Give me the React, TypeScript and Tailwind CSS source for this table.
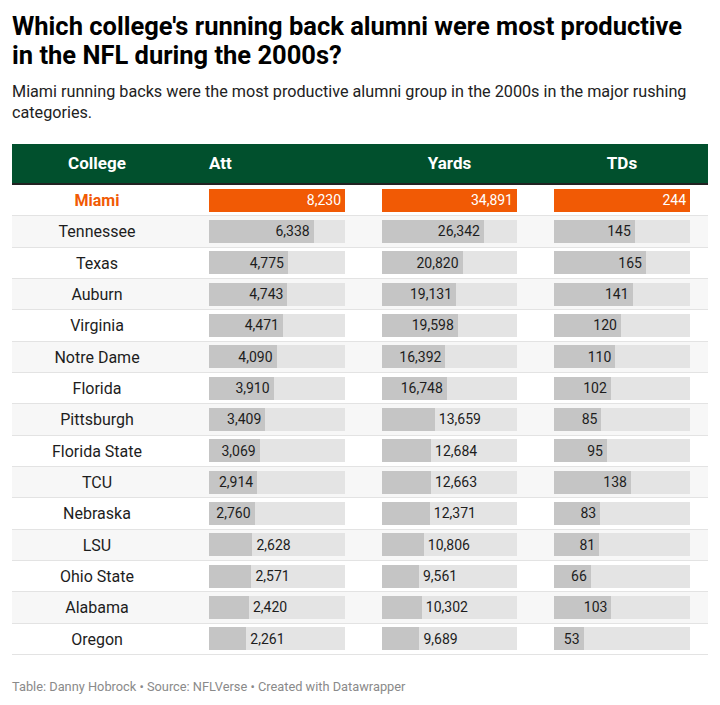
import React from "react";

type Row = { college: string; att: number; yards: number; tds: number };

const rows: Row[] = [
  { college: "Miami", att: 8230, yards: 34891, tds: 244 },
  { college: "Tennessee", att: 6338, yards: 26342, tds: 145 },
  { college: "Texas", att: 4775, yards: 20820, tds: 165 },
  { college: "Auburn", att: 4743, yards: 19131, tds: 141 },
  { college: "Virginia", att: 4471, yards: 19598, tds: 120 },
  { college: "Notre Dame", att: 4090, yards: 16392, tds: 110 },
  { college: "Florida", att: 3910, yards: 16748, tds: 102 },
  { college: "Pittsburgh", att: 3409, yards: 13659, tds: 85 },
  { college: "Florida State", att: 3069, yards: 12684, tds: 95 },
  { college: "TCU", att: 2914, yards: 12663, tds: 138 },
  { college: "Nebraska", att: 2760, yards: 12371, tds: 83 },
  { college: "LSU", att: 2628, yards: 10806, tds: 81 },
  { college: "Ohio State", att: 2571, yards: 9561, tds: 66 },
  { college: "Alabama", att: 2420, yards: 10302, tds: 103 },
  { college: "Oregon", att: 2261, yards: 9689, tds: 53 },
];

const fmt = (n: number) => n.toLocaleString("en-US");

// rough Roboto 14px text width, used to decide if the label fits in the bar
const textWidth = (s: string) =>
  s.split("").reduce((w, c) => w + (c === "," ? 2.8 : 7.9), 0);

const Bar = ({
  value,
  max,
  track,
  highlight,
}: {
  value: number;
  max: number;
  track: number;
  highlight: boolean;
}) => {
  const w = (value / max) * track;
  const label = fmt(value);
  const inside = w - textWidth(label) >= 11;

  return (
    <div className="flex h-[23px] bg-[#e4e4e4]" style={{ width: track }}>
      <div
        className={`flex h-full shrink-0 items-center justify-end ${
          highlight ? "bg-[#f15a05]" : "bg-[#c5c5c5]"
        }`}
        style={{ width: w }}
      >
        {inside && (
          <span
            className={`pr-[4px] text-[14px] leading-none ${
              highlight ? "text-white" : "text-[#1d1d1d]"
            }`}
          >
            {label}
          </span>
        )}
      </div>
      {!inside && (
        <span className="flex items-center pl-[4px] text-[14px] leading-none text-[#1d1d1d]">
          {label}
        </span>
      )}
    </div>
  );
};

export default function App() {
  const maxAtt = Math.max(...rows.map((r) => r.att));
  const maxYards = Math.max(...rows.map((r) => r.yards));
  const maxTds = Math.max(...rows.map((r) => r.tds));

  return (
    <div className="min-h-[705px] w-[720px] bg-white px-[12px] pt-[12px] font-['Roboto',sans-serif] text-[#1d1d1d]">
      <h1 className="text-[25.5px] font-bold leading-[28.5px] text-black">
        Which college's running back alumni were most productive
        <br />
        in the NFL during the 2000s?
      </h1>
      <p className="mt-[12px] text-[16.2px] leading-[21px] text-[#222]">
        Miami running backs were the most productive alumni group in the 2000s in the major rushing
        categories.
      </p>

      <div className="mt-[21px] w-[696px]">
        {/* Header */}
        <div className="flex h-[41px] items-center border-b-2 border-[#222] bg-[#01502d] text-[17px] font-bold text-white">
          <div className="w-[170px] text-center">College</div>
          <div className="ml-[27px] w-[136px]">Att</div>
          <div className="ml-[37px] w-[135px] text-center">Yards</div>
          <div className="ml-[37px] w-[136px] text-center">TDs</div>
        </div>

        {rows.map((r, i) => {
          const top = i === 0;
          return (
            <div
              key={r.college}
              className={`flex h-[31.33px] items-center border-b border-[#e3e3e3] ${
                i % 2 === 1 ? "bg-[#f7f7f7]" : "bg-white"
              }`}
            >
              <div
                className={`w-[170px] pt-[2px] text-center text-[16px] ${
                  top ? "font-bold text-[#f15a05]" : "text-[#1d1d1d]"
                }`}
              >
                {r.college}
              </div>
              <div className="ml-[27px]">
                <Bar value={r.att} max={maxAtt} track={136} highlight={top} />
              </div>
              <div className="ml-[37px]">
                <Bar value={r.yards} max={maxYards} track={135} highlight={top} />
              </div>
              <div className="ml-[37px]">
                <Bar value={r.tds} max={maxTds} track={136} highlight={top} />
              </div>
            </div>
          );
        })}
      </div>

      <p className="mt-[22px] text-[12.8px] text-[#8a8a8a]">
        Table: Danny Hobrock • Source: NFLVerse • Created with Datawrapper
      </p>
    </div>
  );
}
